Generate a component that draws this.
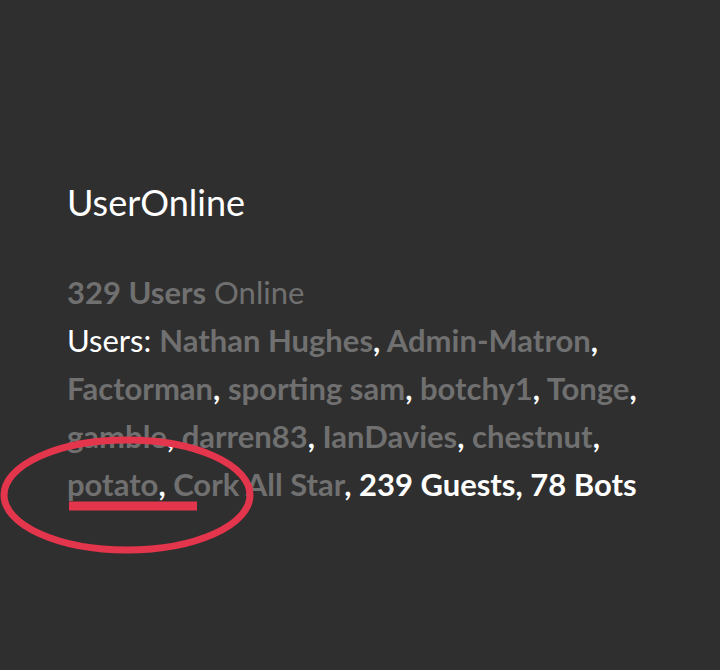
import React from "react";

const users = [
  "Nathan Hughes",
  "Admin-Matron",
  "Factorman",
  "sporting sam",
  "botchy1",
  "Tonge",
  "gamble",
  "darren83",
  "IanDavies",
  "chestnut",
  "potato",
  "Cork All Star",
];

export default function App() {
  return (
    <div
      className="relative h-[670px] w-[720px] overflow-hidden bg-[#2f2f2f] text-white"
      style={{ fontFamily: "Lato, 'Noto Sans', sans-serif" }}
    >
      <div className="pl-[67px] pt-[180px]">
        <h2 className="text-[36px] leading-[44px] font-normal">UserOnline</h2>

        <div className="mt-[44px] w-[600px] text-[31px] leading-[48px]">
          <div className="text-[#707070]">
            <span className="font-bold">329 Users</span> Online
          </div>
          <div>
            Users:{" "}
            {users.map((u) => (
              <React.Fragment key={u}>
                <span className="font-bold text-[#707070]">{u}</span>
                <span className="font-bold">, </span>
              </React.Fragment>
            ))}
            <span className="font-bold">239 Guests, 78 Bots</span>
          </div>
        </div>
      </div>

      {/* red annotation drawn over the text */}
      <svg
        className="pointer-events-none absolute left-0 top-0"
        width="720"
        height="670"
        viewBox="0 0 720 670"
      >
        <ellipse
          cx="127"
          cy="495"
          rx="123"
          ry="55"
          fill="none"
          stroke="#e3354b"
          strokeWidth="7"
        />
        <line
          x1="69"
          y1="506"
          x2="197"
          y2="506"
          stroke="#e3354b"
          strokeWidth="9"
        />
      </svg>
    </div>
  );
}
